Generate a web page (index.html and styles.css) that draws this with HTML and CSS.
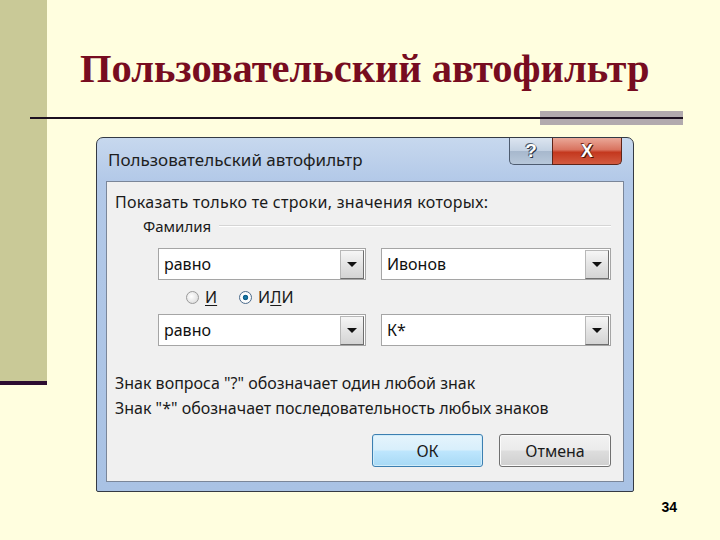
FILE: index.html
```html
<!DOCTYPE html>
<html lang="ru">
<head>
<meta charset="utf-8">
<title>Пользовательский автофильтр</title>
<link rel="stylesheet" href="styles.css">
</head>
<body>
<div class="slide">
  <div class="sidebar"></div>
  <div class="main">
    <h1 class="title">Пользовательский автофильтр</h1>
    <div class="rule"><div class="rule-block"></div><div class="rule-line"></div></div>

    <div class="dialog">
      <div class="titlebar">
        <span class="caption">Пользовательский автофильтр</span>
        <div class="caption-buttons">
          <div class="cbtn help">?</div>
          <div class="cbtn close">X</div>
        </div>
      </div>
      <div class="client">
        <div class="lead">Показать только те строки, значения которых:</div>
        <div class="group"><span class="group-label">Фамилия</span><span class="group-line"></span></div>
        <div class="combo-row">
          <div class="combo left"><span class="combo-text">равно</span><span class="drop"><span class="tri"></span></span></div>
          <div class="combo right"><span class="combo-text">Ивонов</span><span class="drop"><span class="tri"></span></span></div>
        </div>
        <div class="radio-row">
          <span class="radio"></span><span class="radio-label"><span class="mn">И</span></span>
          <span class="radio checked"></span><span class="radio-label">И<span class="mn">Л</span>И</span>
        </div>
        <div class="combo-row">
          <div class="combo left"><span class="combo-text">равно</span><span class="drop"><span class="tri"></span></span></div>
          <div class="combo right"><span class="combo-text">К*</span><span class="drop"><span class="tri"></span></span></div>
        </div>
        <div class="hints">
          <div>Знак вопроса "?" обозначает один любой знак</div>
          <div>Знак "*" обозначает последовательность любых знаков</div>
        </div>
        <div class="button-row">
          <div class="btn default">ОК</div>
          <div class="btn">Отмена</div>
        </div>
      </div>
    </div>

    <div class="page-num">34</div>
  </div>
</div>
</body>
</html>
```
FILE: styles.css
```css
html, body {
  margin: 0;
  padding: 0;
}
body {
  width: 720px;
  height: 540px;
  background: #FFFEDF;
  overflow: hidden;
}
.slide {
  display: flex;
  width: 720px;
  height: 540px;
}
.sidebar {
  flex: 0 0 47px;
  height: 381px;
  background: #C9C997;
  border-bottom: 4px solid #2C0C30;
}
.main {
  flex: 1;
  display: flex;
  flex-direction: column;
}
.title {
  margin: 0;
  padding: 49px 0 0 33px;
  font-family: "Liberation Serif", "Times New Roman", serif;
  font-weight: bold;
  font-size: 40.5px;
  line-height: 40px;
  color: #770C20;
  white-space: nowrap;
}
.rule {
  display: grid;
  margin: 22px 0 0 -17px;
  width: 653px;
  height: 14px;
}
.rule-block {
  grid-area: 1 / 1;
  justify-self: end;
  width: 143px;
  height: 14px;
  background: #B2AAAE;
}
.rule-line {
  grid-area: 1 / 1;
  align-self: center;
  height: 2px;
  background: #1C1020;
}

/* dialog */
.dialog {
  box-sizing: border-box;
  margin: 12px 0 0 49px;
  width: 538px;
  height: 355px;
  border: 1px solid #343A44;
  border-radius: 7px 7px 2px 2px;
  padding: 0 9px 9px 9px;
  background: linear-gradient(180deg, #C7D8EE 0%, #B3C9E8 12%, #A9C2E4 100%);
  display: flex;
  flex-direction: column;
  font-family: "Noto Sans", "DejaVu Sans", sans-serif;
  color: #1A1A1A;
}
.titlebar {
  height: 43px;
  display: flex;
  align-items: flex-start;
  justify-content: space-between;
}
.caption {
  margin-top: 11px;
  margin-left: 2px;
  font-size: 17px;
  line-height: 22px;
  color: #1E1E1E;
}
.caption-buttons {
  display: flex;
  margin-right: 2px;
}
.cbtn {
  height: 27px;
  display: flex;
  align-items: center;
  justify-content: center;
  font-family: "Liberation Sans", Arial, sans-serif;
  font-weight: bold;
  color: #FFFFFF;
  box-sizing: border-box;
  border: 1px solid #4E5C70;
  border-top: none;
}
.help {
  width: 43px;
  border-radius: 0 0 0 5px;
  background: linear-gradient(180deg, #DCE5F0 0%, #C3D1E2 48%, #A7B8CD 52%, #B8C8DA 100%);
  font-size: 19px;
  text-shadow: 0 0 1px #2A3444, 1px 1px 0 #2A3444, -1px -1px 0 #5A6678;
  border-right: none;
}
.close {
  width: 70px;
  border-radius: 0 0 5px 0;
  border-color: #5E2418;
  background: linear-gradient(180deg, #EAA898 0%, #D9735F 45%, #C4381E 55%, #D25A40 100%);
  font-size: 18px;
  text-shadow: 0 0 1px #3A0E06, 1px 1px 0 #4A140A, -1px -1px 0 #7A2A1A;
}
.client {
  flex: 1;
  background: #F0F0F0;
  border: 1px solid #7A8699;
  display: flex;
  flex-direction: column;
  font-size: 16px;
}
.lead {
  margin: 10px 0 0 8px;
  line-height: 20px;
  letter-spacing: 0.3px;
}
.group {
  display: flex;
  align-items: center;
  margin: 4px 12px 0 36px;
  height: 20px;
}
.group-label {
  font-size: 15px;
  line-height: 20px;
}
.group-line {
  flex: 1;
  margin-left: 8px;
  height: 0;
  border-top: 1px solid #D5D5D5;
  border-bottom: 1px solid #FFFFFF;
}
.combo-row {
  display: flex;
  gap: 15px;
  margin: 12px 0 0 51px;
}
.radio-row + .combo-row {
  margin-top: 0;
}
.combo {
  box-sizing: border-box;
  height: 32px;
  background: #FFFFFF;
  border: 1px solid #A5A5A5;
  display: flex;
  align-items: center;
  justify-content: space-between;
  padding: 0 1px 0 5px;
}
.combo.left { width: 208px; }
.combo.right { width: 230px; }
.combo-text {
  line-height: 20px;
  color: #101010;
}
.drop {
  box-sizing: border-box;
  width: 24px;
  height: 29px;
  border: 1px solid #6E6E6E;
  border-top-color: #B8B8B8;
  border-left-color: #B8B8B8;
  background: linear-gradient(180deg, #F6F6F6 0%, #E4E4E4 50%, #D4D4D4 100%);
  display: flex;
  align-items: center;
  justify-content: center;
}
.tri {
  width: 0;
  height: 0;
  border-left: 5px solid transparent;
  border-right: 5px solid transparent;
  border-top: 5px solid #111111;
}
.radio-row {
  height: 34px;
  display: flex;
  align-items: center;
  margin-left: 79px;
}
.radio {
  box-sizing: border-box;
  width: 13px;
  height: 13px;
  border-radius: 50%;
  border: 1px solid #9A9A9A;
  background: radial-gradient(circle at 40% 40%, #FFFFFF 0%, #E6E6E6 60%, #D0D0D0 100%);
}
.radio.checked {
  margin-left: 22px;
  border-color: #4C6C8C;
  background: radial-gradient(circle, #1C7FB0 0%, #0E5E8A 30%, #FFFFFF 40%, #F2F2F2 100%);
}
.radio-label {
  margin-left: 6px;
  line-height: 20px;
}
.mn {
  text-decoration: underline;
  text-underline-offset: 2px;
}
.hints {
  margin: 25px 0 0 8px;
  line-height: 25px;
}
.button-row {
  display: flex;
  justify-content: flex-end;
  gap: 16px;
  margin: 13px 12px 0 0;
}
.btn {
  box-sizing: border-box;
  width: 112px;
  height: 33px;
  border: 1px solid #707070;
  border-radius: 3px;
  background: linear-gradient(180deg, #F2F2F2 0%, #EBEBEB 48%, #DDDDDD 52%, #CFCFCF 100%);
  display: flex;
  align-items: center;
  justify-content: center;
  box-shadow: inset 0 0 0 1px #FBFBFB;
}
.btn.default {
  width: 111px;
  border-color: #3C7FB1;
  background: linear-gradient(180deg, #E5F4FC 0%, #D8EFFB 48%, #BEE6FD 52%, #A7D9F5 100%);
  box-shadow: inset 0 0 0 1px #D0ECFA;
}
.page-num {
  align-self: flex-end;
  margin: 7px 43px 0 0;
  font-family: "Liberation Sans", Arial, sans-serif;
  font-weight: bold;
  font-size: 14px;
  line-height: 16px;
  color: #000000;
}
```
